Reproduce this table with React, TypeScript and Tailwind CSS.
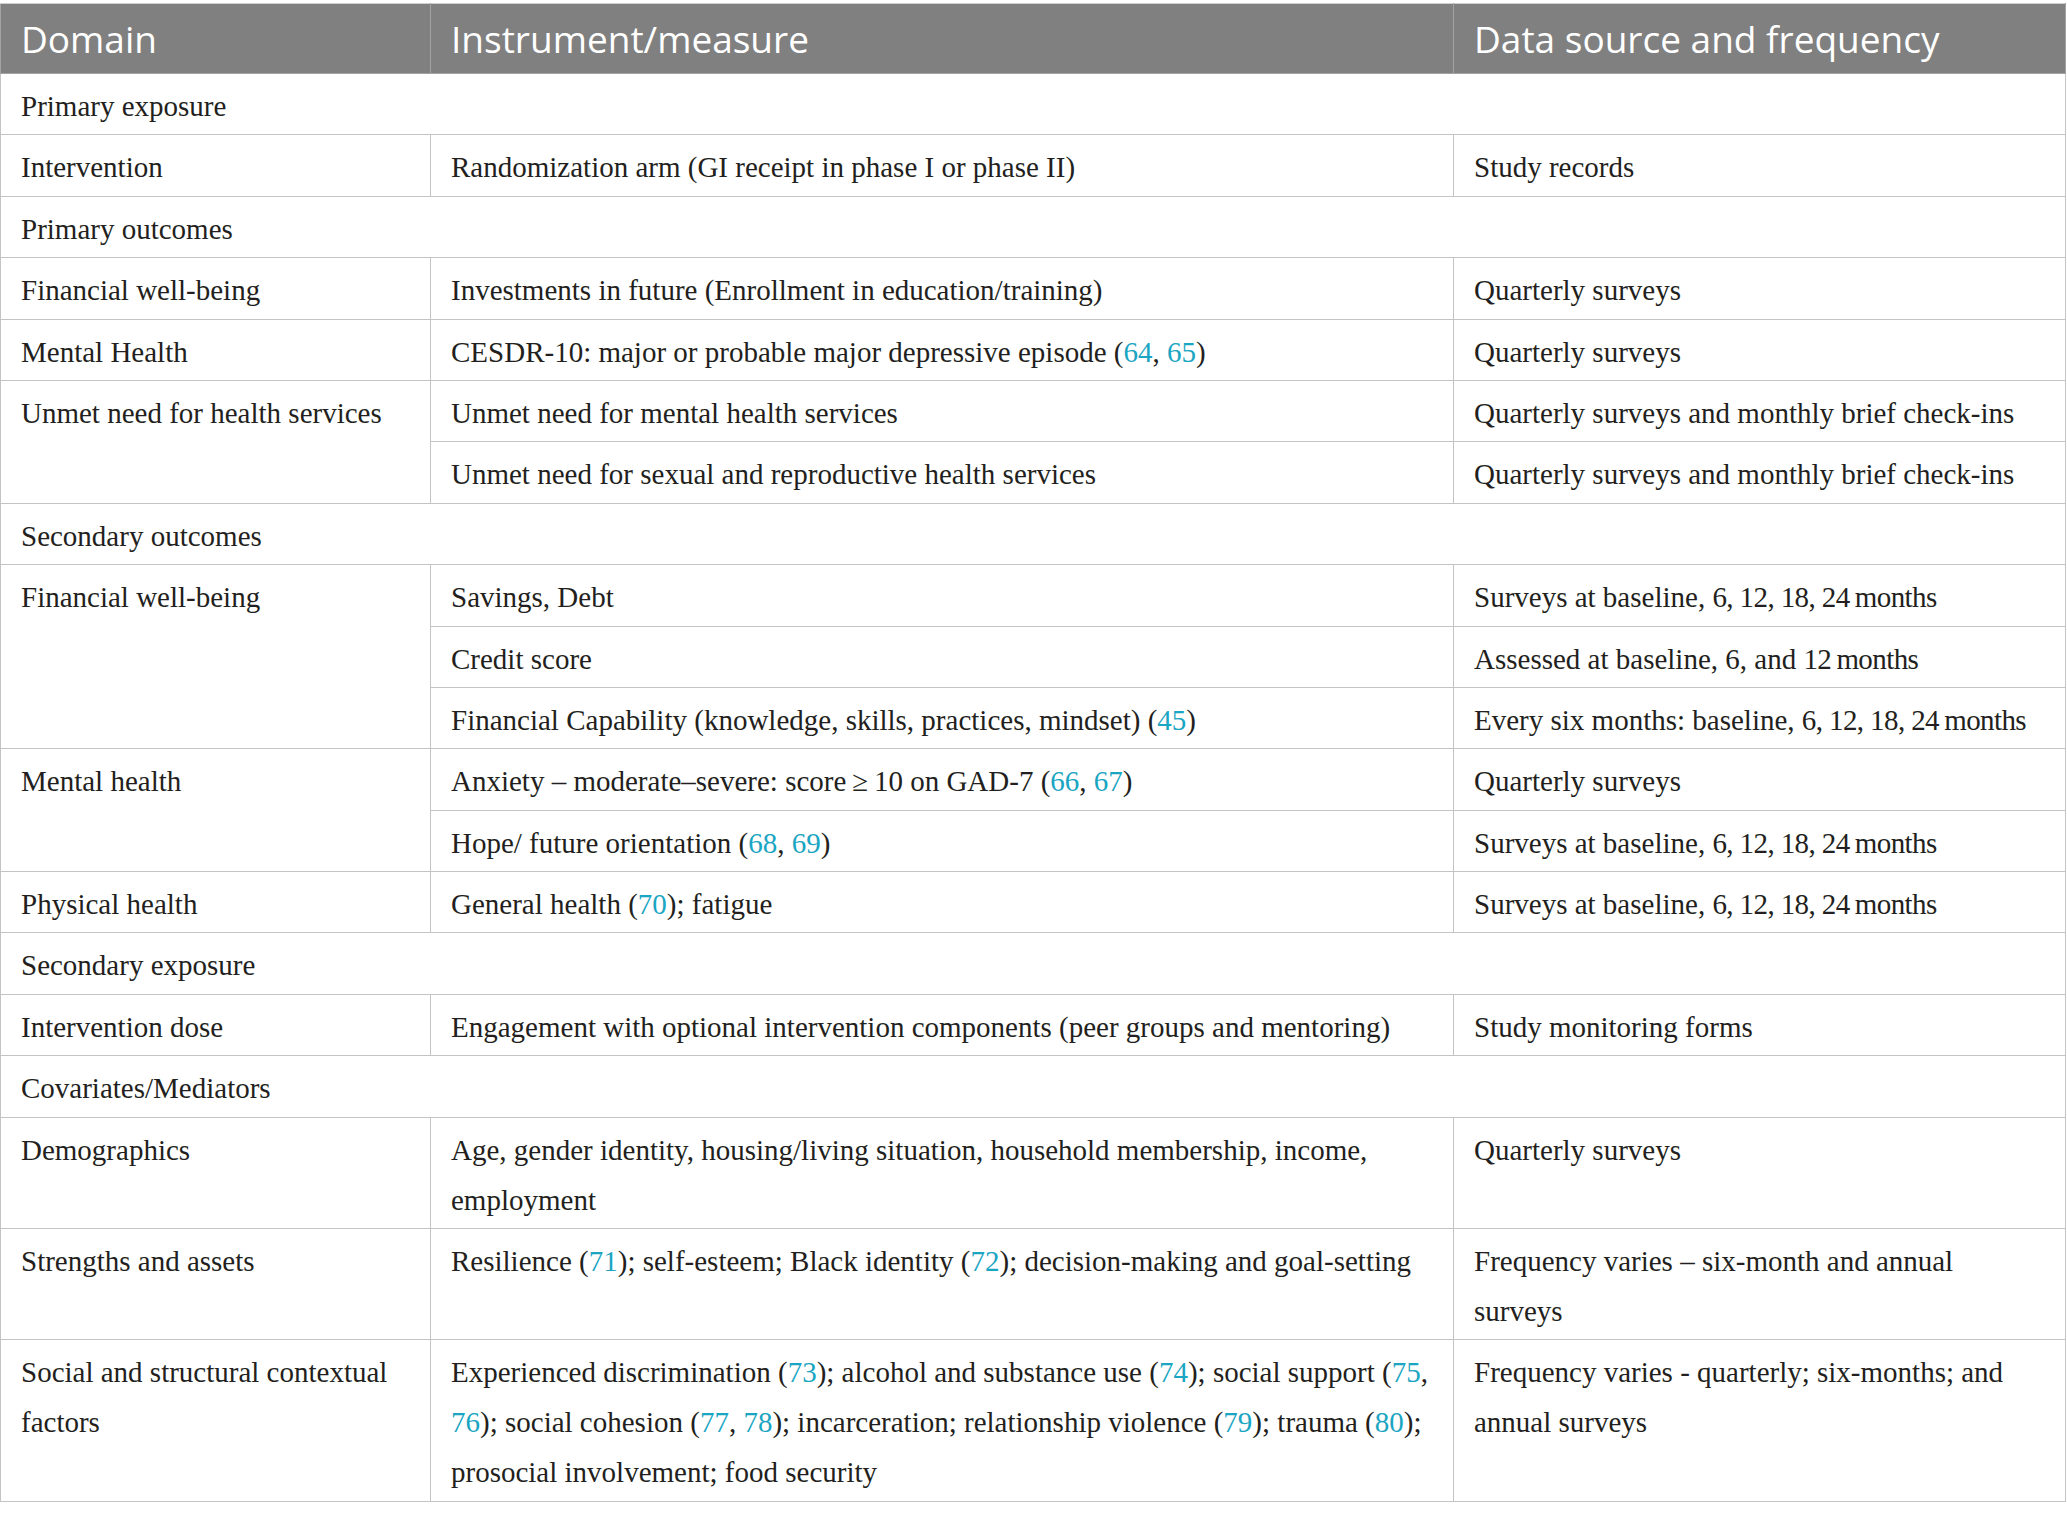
import React from 'react';

type Cell = React.ReactNode;

const Ref = ({ n }: { n: string }) => <span className="text-[#1aa5c2]">{n}</span>;

const refs = (...ns: string[]) => (
  <>
    (
    {ns.map((n, i) => (
      <React.Fragment key={n}>
        {i > 0 && ', '}
        <Ref n={n} />
      </React.Fragment>
    ))}
    )
  </>
);

// tight spacing for "24 months" etc, like the reference's thin spaces
const Mo = ({ children }: { children: string }) => <span className="tracking-[-0.6px]">{children}</span>;

const td = 'border border-[#c4c4c4] px-[20px] pt-[7px] pb-[3.4px] align-top leading-[50px]';

function Section({ label }: { label: string }) {
  return (
    <tr>
      <td colSpan={3} className={td}>
        {label}
      </td>
    </tr>
  );
}

function Row({ domain, span = 1, measure, source }: { domain?: Cell; span?: number; measure: Cell; source: Cell }) {
  return (
    <tr>
      {domain !== undefined && (
        <td rowSpan={span} className={td}>
          {domain}
        </td>
      )}
      <td className={td}>{measure}</td>
      <td className={td}>{source}</td>
    </tr>
  );
}

const th = 'h-[70px] border border-[#a2a2a2] border-t-[#cfcfcf] px-[20px] py-0 text-left align-middle font-normal';

export default function App() {
  return (
    <div className="min-h-screen bg-white pt-[3px]">
      <table
        className="w-[2066px] table-fixed border-collapse text-[29px] text-[#231f20]"
        style={{ fontFamily: '"Liberation Serif", "Times New Roman", serif' }}
      >
        <colgroup>
          <col className="w-[430px]" />
          <col className="w-[1023px]" />
          <col />
        </colgroup>
        <thead>
          <tr className="bg-[#808080] text-[37px] text-white" style={{ fontFamily: '"Open Sans", sans-serif' }}>
            <th className={th}>Domain</th>
            <th className={th}>Instrument/measure</th>
            <th className={th}>Data source and frequency</th>
          </tr>
        </thead>
        <tbody>
          <Section label="Primary exposure" />
          <Row domain="Intervention" measure="Randomization arm (GI receipt in phase I or phase II)" source="Study records" />
          <Section label="Primary outcomes" />
          <Row domain="Financial well-being" measure="Investments in future (Enrollment in education/training)" source="Quarterly surveys" />
          <Row
            domain="Mental Health"
            measure={<>CESDR-10: major or probable major depressive episode {refs('64', '65')}</>}
            source="Quarterly surveys"
          />
          <Row
            domain="Unmet need for health services"
            span={2}
            measure="Unmet need for mental health services"
            source="Quarterly surveys and monthly brief check-ins"
          />
          <Row measure="Unmet need for sexual and reproductive health services" source="Quarterly surveys and monthly brief check-ins" />
          <Section label="Secondary outcomes" />
          <Row domain="Financial well-being" span={3} measure="Savings, Debt" source={<>Surveys at baseline, <Mo>{'6, 12, 18, 24\u2009months'}</Mo></>} />
          <Row measure="Credit score" source={<>Assessed at baseline, 6, and <Mo>{'12\u2009months'}</Mo></>} />
          <Row
            measure={<>Financial Capability (knowledge, skills, practices, mindset) {refs('45')}</>}
            source={<>Every six months: baseline, <Mo>{'6, 12, 18, 24\u2009months'}</Mo></>}
          />
          <Row
            domain="Mental health"
            span={2}
            measure={<>Anxiety – moderate–severe: score{'\u2009'}≥{'\u2009'}10 on GAD-7 {refs('66', '67')}</>}
            source="Quarterly surveys"
          />
          <Row
            measure={<>Hope/ future orientation {refs('68', '69')}</>}
            source={<>Surveys at baseline, <Mo>{'6, 12, 18, 24\u2009months'}</Mo></>}
          />
          <Row
            domain="Physical health"
            measure={<>General health {refs('70')}; fatigue</>}
            source={<>Surveys at baseline, <Mo>{'6, 12, 18, 24\u2009months'}</Mo></>}
          />
          <Section label="Secondary exposure" />
          <Row
            domain="Intervention dose"
            measure="Engagement with optional intervention components (peer groups and mentoring)"
            source="Study monitoring forms"
          />
          <Section label="Covariates/Mediators" />
          <Row
            domain="Demographics"
            measure="Age, gender identity, housing/living situation, household membership, income, employment"
            source="Quarterly surveys"
          />
          <Row
            domain="Strengths and assets"
            measure={<>Resilience {refs('71')}; self-esteem; Black identity {refs('72')}; decision-making and goal-setting</>}
            source="Frequency varies – six-month and annual surveys"
          />
          <Row
            domain="Social and structural contextual factors"
            measure={
              <>
                Experienced discrimination {refs('73')}; alcohol and substance use {refs('74')}; social support {refs('75', '76')};
                social cohesion {refs('77', '78')}; incarceration; relationship violence {refs('79')}; trauma {refs('80')};{' '}
                <span>prosocial involvement; food security</span>
              </>
            }
            source="Frequency varies - quarterly; six-months; and annual surveys"
          />
        </tbody>
      </table>
    </div>
  );
}
